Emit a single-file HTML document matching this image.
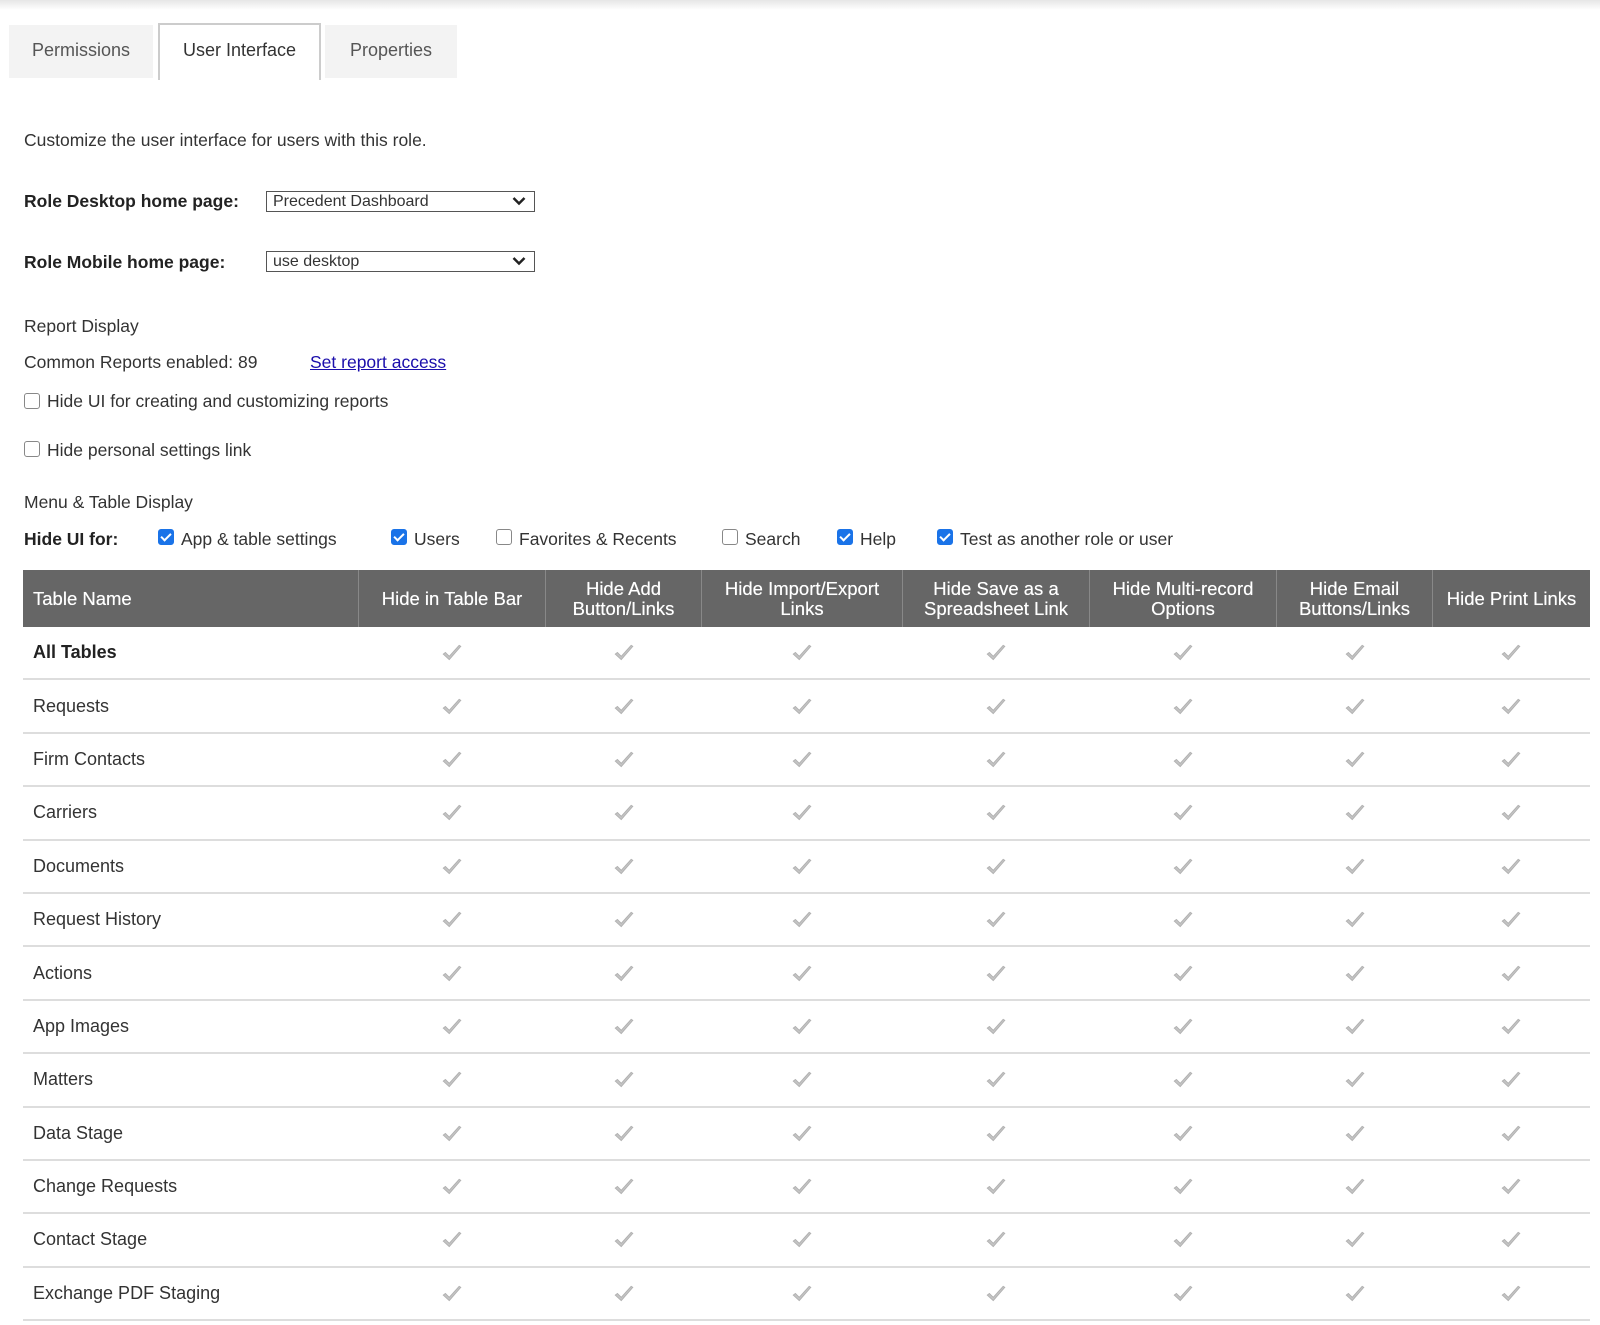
<!DOCTYPE html>
<html><head><meta charset="utf-8"><style>
body{margin:0;width:1600px;height:1325px;background:#fff;font-family:"Liberation Sans",sans-serif;color:#333;position:relative;overflow:hidden;font-size:17.5px}
.a{position:absolute;white-space:nowrap}
.topbar{position:absolute;left:0;top:0;width:1600px;height:10px;background:linear-gradient(#e6e6e6,#fff)}
.tab{position:absolute;top:25px;height:53px;background:#f3f3f3;font-size:18px;color:#555;text-align:center;line-height:50px}
.tab.on{background:#fff;border:2px solid #ccc;border-bottom:none;color:#333;top:23px;height:55px}
.sel{position:absolute;left:266px;width:261px;height:19px;border:1.5px solid #555;font-size:16px;line-height:19px;padding-left:6px;box-sizing:content-box;color:#333}
.sel svg{position:absolute;right:8px;top:4px}
b{font-weight:bold;color:#222}
.cb{position:absolute;width:14px;height:14px;border:1.5px solid #888;border-radius:3px;background:#fff}
.cb.on{background:#1a73e8;border-color:#1a73e8}
.cb.on:after{content:"";position:absolute;left:4px;top:1px;width:4px;height:8px;border:solid #fff;border-width:0 2px 2px 0;transform:rotate(45deg)}
table{position:absolute;left:23px;top:570px;width:1567px;border-collapse:collapse}
th{background:#666;color:#fff;font-weight:normal;font-size:18.5px;line-height:20px;height:57px;border-left:1.5px solid #888;padding:0 4px;text-shadow:0 0 0.4px #fff}
th:first-child{text-align:left;padding-left:10px;border-left:none}
td{height:51.4px;border-bottom:2px solid #ddd;text-align:center;padding:0}
td svg{position:relative;top:3px}
td:first-child{text-align:left;padding-left:10px;font-size:18px;color:#333}
a{color:#1a0dab}
</style></head><body>
<div class="topbar"></div>
<div class="tab" style="left:9px;width:144px">Permissions</div>
<div class="tab on" style="left:158px;width:159px">User Interface</div>
<div class="tab" style="left:325px;width:132px">Properties</div>

<div class="a" style="left:24px;top:130px">Customize the user interface for users with this role.</div>
<div class="a" style="left:24px;top:191px"><b>Role Desktop home page:</b></div>
<div class="sel" style="top:191px">Precedent Dashboard<svg width="14" height="10" viewBox="0 0 14 10"><path d="M1.5 2 L7 7.5 L12.5 2" fill="none" stroke="#222" stroke-width="2.5"/></svg></div>
<div class="a" style="left:24px;top:252px"><b>Role Mobile home page:</b></div>
<div class="sel" style="top:251px">use desktop<svg width="14" height="10" viewBox="0 0 14 10"><path d="M1.5 2 L7 7.5 L12.5 2" fill="none" stroke="#222" stroke-width="2.5"/></svg></div>

<div class="a" style="left:24px;top:316px">Report Display</div>
<div class="a" style="left:24px;top:352px">Common Reports enabled: 89</div>
<div class="a" style="left:310px;top:352px"><a href="#">Set report access</a></div>
<div class="cb" style="left:24px;top:393px"></div>
<div class="a" style="left:47px;top:391px">Hide UI for creating and customizing reports</div>
<div class="cb" style="left:24px;top:441px"></div>
<div class="a" style="left:47px;top:440px">Hide personal settings link</div>

<div class="a" style="left:24px;top:492px">Menu &amp; Table Display</div>
<div class="a" style="left:24px;top:529px"><b>Hide UI for:</b></div>
<div class="cb on" style="left:158px;top:529px"></div><div class="a" style="left:181px;top:529px">App &amp; table settings</div>
<div class="cb on" style="left:391px;top:529px"></div><div class="a" style="left:414px;top:529px">Users</div>
<div class="cb" style="left:496px;top:529px"></div><div class="a" style="left:519px;top:529px">Favorites &amp; Recents</div>
<div class="cb" style="left:722px;top:529px"></div><div class="a" style="left:745px;top:529px">Search</div>
<div class="cb on" style="left:837px;top:529px"></div><div class="a" style="left:860px;top:529px">Help</div>
<div class="cb on" style="left:937px;top:529px"></div><div class="a" style="left:960px;top:529px">Test as another role or user</div>

<svg width="0" height="0" style="position:absolute"><defs><symbol id="ck" viewBox="0 0 20 20"><path d="M2 11 L7.5 16 L18 4 L16.5 3 L7.5 13 L4 9.5 Z" fill="#c4c4c4" stroke="#b0b0b0" stroke-width="0.8"/></symbol></defs></svg>
<table>
<tr><th style="width:321px">Table Name</th><th style="width:178px">Hide in Table Bar</th><th style="width:147px">Hide Add<br>Button/Links</th><th style="width:192px">Hide Import/Export<br>Links</th><th style="width:178px">Hide Save as a<br>Spreadsheet Link</th><th style="width:178px">Hide Multi-record<br>Options</th><th style="width:147px">Hide Email<br>Buttons/Links</th><th>Hide Print Links</th></tr>
<tbody id="tb"></tbody>
</table>
<script>
var names=["<b>All Tables</b>","Requests","Firm Contacts","Carriers","Documents","Request History","Actions","App Images","Matters","Data Stage","Change Requests","Contact Stage","Exchange PDF Staging"];
var c='<td><svg width="22" height="22"><use href="#ck"/></svg></td>',h="";
names.forEach(function(n){h+="<tr><td>"+n+"</td>"+c+c+c+c+c+c+c+"</tr>";});
document.getElementById("tb").innerHTML=h;
</script>
</body></html>
